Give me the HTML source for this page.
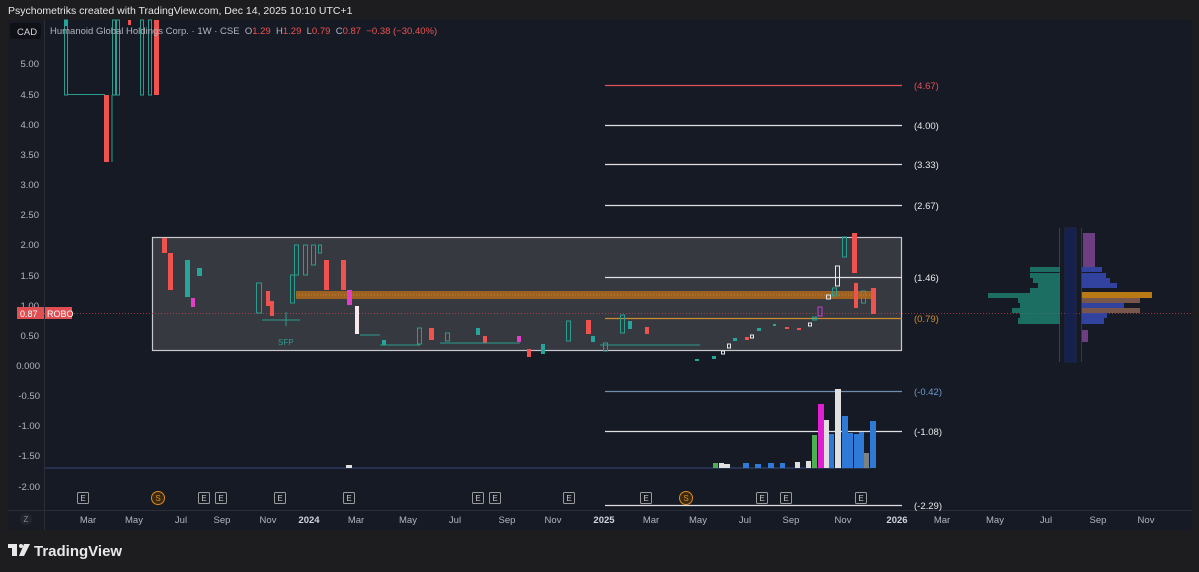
<!DOCTYPE html>
<html><head><meta charset="utf-8"><style>
body{margin:0;width:1199px;height:572px;background:#1d1d1f;overflow:hidden;font-family:"Liberation Sans",sans-serif}
svg{position:absolute;left:0;top:0}
</style></head><body>
<svg width="1199" height="572" viewBox="0 0 1199 572" font-family="Liberation Sans, sans-serif">
<rect x="0" y="0" width="1199" height="572" fill="#1d1d1f"/>
<text x="8" y="14" fill="#e6e6e6" font-size="10.5">Psychometriks created with TradingView.com, Dec 14, 2025 10:10 UTC+1</text>
<rect x="8" y="20" width="1184" height="510" fill="#161a25"/>
<rect x="8" y="20" width="36" height="510" fill="#181b24"/>
<line x1="44.5" y1="20" x2="44.5" y2="530" stroke="#2a2e39"/>
<line x1="8" y1="510.5" x2="1192" y2="510.5" stroke="#2a2e39"/>
<rect x="10" y="23" width="31" height="16" rx="2" fill="#0f1117"/>
<text x="17" y="35" fill="#d1d4dc" font-size="9.5">CAD</text>
<g fill="#b2b5be" font-size="9.5" text-anchor="end">
<text x="39" y="67">5.00</text><text x="39" y="98">4.50</text><text x="39" y="128">4.00</text><text x="39" y="158">3.50</text><text x="39" y="188">3.00</text><text x="39" y="218">2.50</text><text x="39" y="248">2.00</text><text x="39" y="279">1.50</text><text x="39" y="339">0.50</text><text x="40" y="369">0.000</text><text x="40" y="399">-0.50</text><text x="40" y="429">-1.00</text><text x="40" y="459">-1.50</text><text x="40" y="490">-2.00</text>
</g>
<text x="39" y="309" fill="#b2b5be" font-size="9.5" text-anchor="end">1.00</text>
<rect x="152.5" y="237.5" width="749" height="113" fill="#363940" stroke="#c8c8cc" stroke-width="1.2"/>
<line x1="44" y1="313.5" x2="1192" y2="313.5" stroke="#d04850" stroke-dasharray="1,2" opacity="0.7"/>
<rect x="17" y="307" width="27" height="12" fill="#e04e52"/>
<text x="20" y="317" fill="#fff" font-size="9">0.87</text>
<rect x="45" y="307" width="27" height="12" fill="#e04e52"/>
<text x="47" y="317" fill="#fff" font-size="9">ROBO</text>
<rect x="296" y="291" width="578" height="8" fill="#a8661e" opacity="0.9"/>
<line x1="296" y1="295" x2="874" y2="295" stroke="#c88030" stroke-dasharray="1,2"/>
<g stroke-width="1.2">
<line x1="605" y1="85.5" x2="902" y2="85.5" stroke="#e0505a"/>
<line x1="605" y1="125.5" x2="902" y2="125.5" stroke="#e0e0e0"/>
<line x1="605" y1="164.5" x2="902" y2="164.5" stroke="#e0e0e0"/>
<line x1="605" y1="205.5" x2="902" y2="205.5" stroke="#e0e0e0"/>
<line x1="605" y1="277.5" x2="902" y2="277.5" stroke="#e0e0e0"/>
<line x1="605" y1="318.5" x2="902" y2="318.5" stroke="#d08a30"/>
<line x1="605" y1="391.5" x2="902" y2="391.5" stroke="#6f8db0"/>
<line x1="605" y1="431.5" x2="902" y2="431.5" stroke="#e0e0e0"/>
<line x1="605" y1="505.5" x2="902" y2="505.5" stroke="#e0e0e0"/>
</g>
<g font-size="9.5">
<text x="914" y="89" fill="#e0505a">(4.67)</text>
<text x="914" y="129" fill="#e8e8e8">(4.00)</text>
<text x="914" y="168" fill="#e8e8e8">(3.33)</text>
<text x="914" y="209" fill="#e8e8e8">(2.67)</text>
<text x="914" y="281" fill="#e8e8e8">(1.46)</text>
<text x="914" y="322" fill="#d08a30">(0.79)</text>
<text x="914" y="395" fill="#6f9ad0">(-0.42)</text>
<text x="914" y="435" fill="#e8e8e8">(-1.08)</text>
<text x="914" y="509" fill="#e8e8e8">(-2.29)</text>
</g>
<g stroke="#2a9d8f" fill="none">
<rect x="64.5" y="20" width="3" height="75"/><rect x="112.5" y="20" width="3" height="75"/><rect x="116.5" y="20" width="3" height="75"/><rect x="140.5" y="20" width="3" height="75"/><rect x="148.5" y="20" width="3" height="75"/>
<line x1="68" y1="94.5" x2="105" y2="94.5"/><line x1="112" y1="162" x2="112" y2="95"/>
</g>
<rect x="64" y="20" width="4" height="6" fill="#26a69a"/>
<rect x="104" y="95" width="5" height="67" fill="#ef5350"/>
<rect x="154" y="20" width="5" height="75" fill="#ef5350"/>
<rect x="128" y="20" width="3" height="5" fill="#ef5350"/>
<text x="50" y="34" fill="#b2b5be" font-size="9.5" xml:space="preserve">Humanoid Global Holdings Corp. · 1W · CSE  O<tspan fill="#ef5350">1.29</tspan>  H<tspan fill="#ef5350">1.29</tspan>  L<tspan fill="#ef5350">0.79</tspan>  C<tspan fill="#ef5350">0.87</tspan>  <tspan fill="#ef5350">−0.38 (−30.40%)</tspan></text>
<g fill="#ef5350">
<rect x="162" y="238" width="5" height="15"/><rect x="168" y="253" width="5" height="37"/><rect x="266" y="291" width="4" height="15"/><rect x="270" y="301" width="4" height="15"/><rect x="324" y="260" width="5" height="30"/><rect x="341" y="260" width="5" height="30"/><rect x="429" y="328" width="5" height="12"/><rect x="483" y="336" width="4" height="7"/><rect x="527" y="349" width="4" height="8"/><rect x="586" y="320" width="5" height="14"/><rect x="645" y="327" width="4" height="7"/><rect x="852" y="233" width="5" height="40"/><rect x="854" y="283" width="4" height="25"/><rect x="871" y="288" width="5" height="26"/>
</g>
<g fill="#26a69a">
<rect x="185" y="260" width="5" height="37"/><rect x="197" y="268" width="5" height="8"/><rect x="382" y="340" width="4" height="5"/><rect x="476" y="328" width="4" height="7"/><rect x="541" y="344" width="4" height="10"/><rect x="591" y="336" width="4" height="6"/><rect x="628" y="321" width="4" height="8"/>
</g>
<g fill="#e040c8"><rect x="191" y="298" width="4" height="9"/><rect x="347" y="290" width="5" height="15"/><rect x="517" y="336" width="4" height="6"/></g>
<rect x="355" y="306" width="4" height="28" fill="#f8e8ee"/>
<g stroke="#2a9d8f" fill="none" stroke-width="1">
<rect x="294.5" y="245" width="4" height="30"/><rect x="303.5" y="245" width="4" height="30"/><rect x="311.5" y="245" width="4" height="20"/><rect x="318.5" y="245" width="3" height="8"/><rect x="256.5" y="283" width="5" height="30"/><rect x="290.5" y="275" width="4" height="28"/><rect x="417.5" y="328" width="4" height="16"/><rect x="566.5" y="321" width="4" height="20"/><rect x="620.5" y="315" width="4" height="18"/><rect x="603.5" y="343" width="4" height="8"/><rect x="445.5" y="333" width="4" height="8"/>
<line x1="262" y1="320" x2="300" y2="320"/><line x1="286" y1="312" x2="286" y2="326"/><line x1="380" y1="345" x2="420" y2="345"/><line x1="440" y1="343" x2="520" y2="343"/><line x1="600" y1="345" x2="700" y2="345"/><line x1="360" y1="335" x2="380" y2="335"/>
</g>
<text x="278" y="345" fill="#2a9d8f" font-size="8">SFP</text>
<g fill="#26a69a"><rect x="695" y="359" width="4" height="2"/><rect x="712" y="356" width="4" height="3"/><rect x="733" y="338" width="4" height="3"/><rect x="757" y="328" width="4" height="3"/><rect x="773" y="324" width="3" height="2"/></g>
<g fill="#ef5350"><rect x="745" y="337" width="4" height="3"/><rect x="785" y="327" width="4" height="2"/><rect x="797" y="328" width="4" height="2"/></g>
<g stroke="#e8e8e8" fill="none"><rect x="721.5" y="351" width="3" height="3"/><rect x="727.5" y="344" width="3" height="4"/><rect x="750.5" y="335" width="3" height="3"/><rect x="808.5" y="323" width="3" height="3"/><rect x="826.5" y="295" width="4" height="4"/><rect x="835.5" y="266" width="4" height="20"/></g>
<g stroke="#2a9d8f" fill="none"><rect x="812.5" y="317" width="4" height="3"/><rect x="832.5" y="288" width="4" height="8"/><rect x="842.5" y="237" width="4" height="20"/><rect x="861.5" y="291" width="4" height="12"/></g>
<rect x="818" y="307" width="4" height="9" fill="none" stroke="#c040d0"/>
<line x1="45" y1="468" x2="870" y2="468" stroke="#3a4a7a"/>
<g fill="#2f7ad6"><rect x="743" y="463" width="6" height="5"/><rect x="755" y="464" width="6" height="4"/><rect x="768" y="463" width="6" height="5"/><rect x="780" y="463" width="5" height="5"/><rect x="829" y="434" width="5" height="34"/><rect x="842" y="416" width="6" height="52"/><rect x="848" y="433" width="5" height="35"/><rect x="854" y="434" width="5" height="34"/><rect x="859" y="432" width="5" height="36"/><rect x="870" y="421" width="6" height="47"/></g>
<g fill="#e0e0e0"><rect x="719" y="463" width="5" height="5"/><rect x="724" y="464" width="6" height="4"/><rect x="795" y="462" width="5" height="6"/><rect x="806" y="461" width="5" height="7"/><rect x="824" y="420" width="5" height="48"/><rect x="835" y="389" width="6" height="79"/></g>
<rect x="713" y="463" width="5" height="5" fill="#4caf50"/>
<rect x="812" y="435" width="5" height="33" fill="#4caf50"/>
<rect x="818" y="404" width="6" height="64" fill="#e020d0"/>
<rect x="864" y="453" width="5" height="15" fill="#808080"/>
<rect x="346" y="465" width="6" height="3" fill="#e0e0e0"/>
<g opacity="0.75">
<rect x="1065" y="228" width="11" height="134" fill="#16225a" stroke="#2a3a80" stroke-width="0.5"/>
<line x1="1059.5" y1="228" x2="1059.5" y2="362" stroke="#2a5a58"/>
<line x1="1081.5" y1="228" x2="1081.5" y2="362" stroke="#4a3a60"/>
<g fill="#1f8a78">
<rect x="1030" y="267" width="30" height="5"/><rect x="1030" y="273" width="30" height="5"/><rect x="1033" y="278" width="27" height="5"/><rect x="1038" y="283" width="22" height="5"/><rect x="1030" y="288" width="30" height="5"/><rect x="988" y="293" width="72" height="5"/><rect x="1018" y="298" width="42" height="5"/><rect x="1020" y="303" width="40" height="5"/><rect x="1012" y="308" width="48" height="5"/><rect x="1020" y="313" width="40" height="5"/><rect x="1018" y="318" width="42" height="6"/></g>
<g fill="#8a4aa0"><rect x="1083" y="233" width="12" height="36"/><rect x="1082" y="330" width="6" height="12"/></g>
<g fill="#3a50c8"><rect x="1082" y="267" width="20" height="5"/><rect x="1082" y="273" width="24" height="5"/><rect x="1082" y="278" width="28" height="5"/><rect x="1082" y="283" width="35" height="5"/><rect x="1082" y="303" width="42" height="5"/><rect x="1082" y="313" width="25" height="5"/><rect x="1082" y="318" width="22" height="6"/></g>
<rect x="1082" y="292" width="70" height="6" fill="#f09a10"/>
<g fill="#9a6a58"><rect x="1082" y="298" width="58" height="5"/><rect x="1082" y="308" width="58" height="5"/></g>
</g>
<g font-size="8" fill="#c8c8c8" text-anchor="middle">
<g stroke="#9a9a9a" fill="none"><rect x="77.5" y="492.5" width="11" height="11" rx="1"/><rect x="198.5" y="492.5" width="11" height="11" rx="1"/><rect x="215.5" y="492.5" width="11" height="11" rx="1"/><rect x="274.5" y="492.5" width="11" height="11" rx="1"/><rect x="343.5" y="492.5" width="11" height="11" rx="1"/><rect x="472.5" y="492.5" width="11" height="11" rx="1"/><rect x="489.5" y="492.5" width="11" height="11" rx="1"/><rect x="563.5" y="492.5" width="11" height="11" rx="1"/><rect x="640.5" y="492.5" width="11" height="11" rx="1"/><rect x="756.5" y="492.5" width="11" height="11" rx="1"/><rect x="780.5" y="492.5" width="11" height="11" rx="1"/><rect x="855.5" y="492.5" width="11" height="11" rx="1"/></g>
<text x="83" y="501">E</text><text x="204" y="501">E</text><text x="221" y="501">E</text><text x="280" y="501">E</text><text x="349" y="501">E</text><text x="478" y="501">E</text><text x="495" y="501">E</text><text x="569" y="501">E</text><text x="646" y="501">E</text><text x="762" y="501">E</text><text x="786" y="501">E</text><text x="861" y="501">E</text>
<circle cx="158" cy="498" r="6.5" fill="#3a2a10" stroke="#e08a20"/><circle cx="686" cy="498" r="6.5" fill="#3a2a10" stroke="#e08a20"/>
<text x="158" y="501" fill="#e08a20">S</text><text x="686" y="501" fill="#e08a20">S</text>
</g>
<circle cx="26" cy="519" r="6" fill="#22252e"/><text x="26" y="522" fill="#888" font-size="8" text-anchor="middle">Z</text>
<g fill="#b2b5be" font-size="9.5" text-anchor="middle">
<text x="88" y="523">Mar</text><text x="134" y="523">May</text><text x="181" y="523">Jul</text><text x="222" y="523">Sep</text><text x="268" y="523">Nov</text><text x="309" y="523" font-weight="bold" fill="#d1d4dc">2024</text><text x="356" y="523">Mar</text><text x="408" y="523">May</text><text x="455" y="523">Jul</text><text x="507" y="523">Sep</text><text x="553" y="523">Nov</text><text x="604" y="523" font-weight="bold" fill="#d1d4dc">2025</text><text x="651" y="523">Mar</text><text x="698" y="523">May</text><text x="745" y="523">Jul</text><text x="791" y="523">Sep</text><text x="843" y="523">Nov</text><text x="897" y="523" font-weight="bold" fill="#d1d4dc">2026</text><text x="942" y="523">Mar</text><text x="995" y="523">May</text><text x="1046" y="523">Jul</text><text x="1098" y="523">Sep</text><text x="1146" y="523">Nov</text>
</g>
<g fill="#e8e8e8"><rect x="8" y="544" width="9" height="4"/><rect x="12" y="544" width="5" height="12"/><circle cx="21" cy="546" r="2"/><path d="M24 544 h6 l-6 12 h-5 z"/></g>
<text x="34" y="556" fill="#e8e8e8" font-size="15" font-weight="bold">TradingView</text>
</svg>
</body></html>
